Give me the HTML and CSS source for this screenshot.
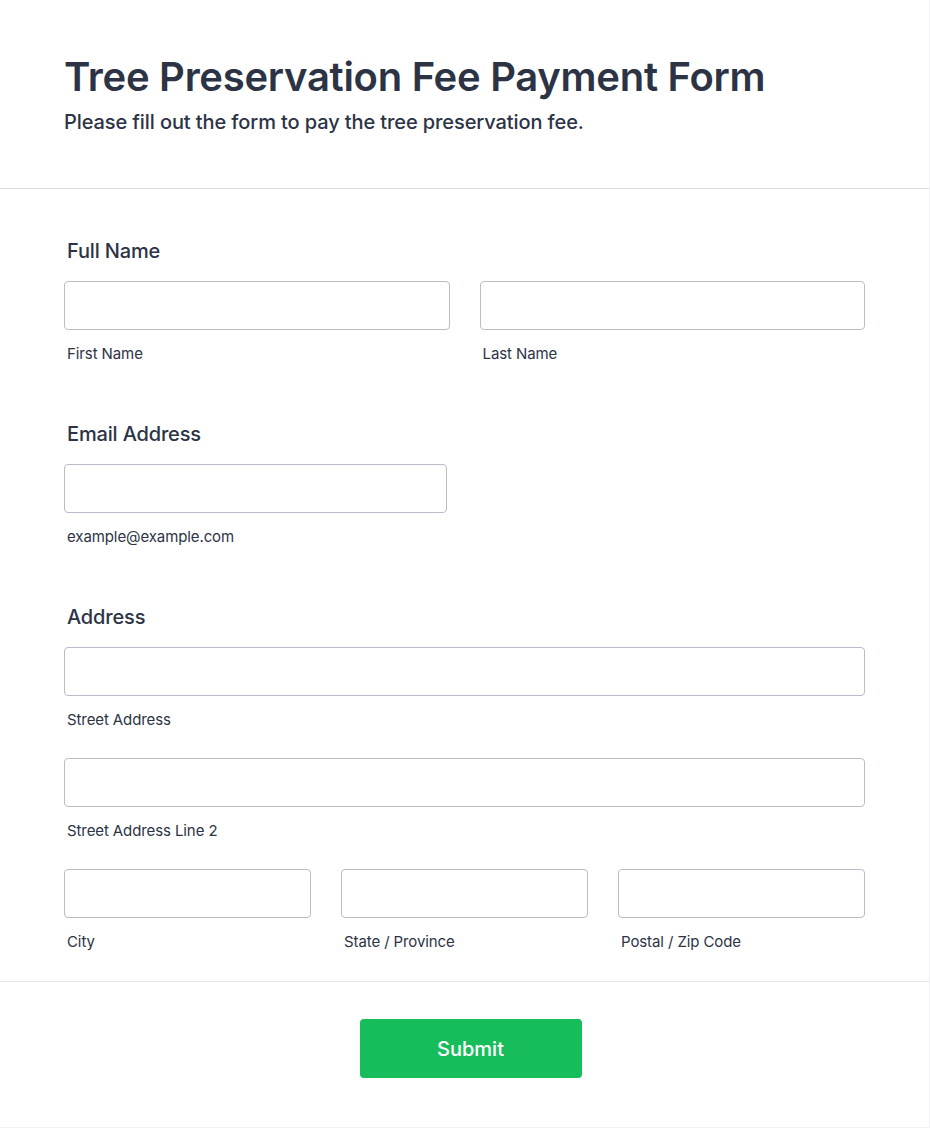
FILE: index.html
```html
<!DOCTYPE html>
<html lang="en">
<head>
<meta charset="utf-8">
<title>Tree Preservation Fee Payment Form</title>
<link rel="stylesheet" href="styles.css">
</head>
<body>
<div class="card">
  <header class="form-header">
    <h1 class="title">Tree Preservation Fee Payment Form</h1>
    <p class="subtitle">Please fill out the form to pay the tree preservation fee.</p>
  </header>
  <form class="form-body">
    <div class="field">
      <label class="label">Full Name</label>
      <div class="row two">
        <div class="col"><input class="input" type="text"><span class="sub">First Name</span></div>
        <div class="col"><input class="input" type="text"><span class="sub">Last Name</span></div>
      </div>
    </div>
    <div class="field">
      <label class="label">Email Address</label>
      <div class="col email"><input class="input" type="email"><span class="sub">example@example.com</span></div>
    </div>
    <div class="field">
      <label class="label">Address</label>
      <div class="col"><input class="input" type="text"><span class="sub">Street Address</span></div>
      <div class="col next"><input class="input" type="text"><span class="sub">Street Address Line 2</span></div>
      <div class="row three next">
        <div class="col"><input class="input" type="text"><span class="sub">City</span></div>
        <div class="col"><input class="input" type="text"><span class="sub">State / Province</span></div>
        <div class="col"><input class="input" type="text"><span class="sub">Postal / Zip Code</span></div>
      </div>
    </div>
  </form>
  <div class="form-footer">
    <button class="submit" type="button">Submit</button>
  </div>
</div>
</body>
</html>
```
FILE: styles.css
```css
* { box-sizing: border-box; }
html, body { margin: 0; padding: 0; background: #ffffff; }
body {
  font-family: Inter, "Noto Sans", "Liberation Sans", sans-serif;
  color: #2c3345;
}
.card {
  width: 930px;
  min-height: 1128px;
  background: #fff;
  border-right: 1px solid #f0f0f5;
  border-bottom: 1px solid #f0f0f5;
}
.form-header {
  padding: 53px 64px 54px 64px;
  border-bottom: 1px solid #dcdce8;
}
.title {
  margin: 0;
  font-size: 40px;
  line-height: 48px;
  font-weight: 600;
  letter-spacing: -0.28px;
  color: #2c3345;
}
.subtitle {
  margin: 9px 0 0 0;
  font-size: 20px;
  line-height: 24px;
  font-weight: 500;
  letter-spacing: -0.1px;
  color: #2c3345;
}
.form-body {
  padding: 50px 64px 30px 64px;
  border-bottom: 1px solid #e6e6ee;
}
.field + .field { margin-top: 59px; }
.label {
  display: block;
  margin: 0 0 18px 3px;
  font-size: 20px;
  line-height: 24px;
  font-weight: 500;
  letter-spacing: -0.16px;
  color: #2c3345;
}
.row { display: grid; gap: 30px; }
.row.two { grid-template-columns: 1fr 1fr; }
.row.three { grid-template-columns: 1fr 1fr 1fr; }
.col { display: flex; flex-direction: column; }
.col.email { width: 383px; }
.next { margin-top: 29px; }
.input {
  display: block;
  width: 100%;
  height: 49px;
  margin: 0;
  border: 1px solid #b8bdc9;
  border-radius: 4px;
  background: #fff;
  font: inherit;
}
.sub {
  display: block;
  margin: 15px 0 0 3px;
  font-size: 15px;
  line-height: 18px;
  letter-spacing: -0.1px;
  color: #2c3345;
}
.form-footer {
  display: flex;
  justify-content: center;
  padding: 37px 0 0 12px;
}
.submit {
  width: 222px;
  height: 59px;
  border: none;
  border-radius: 4px;
  background: #18bd5b;
  color: #fff;
  font-family: Inter, "Noto Sans", "Liberation Sans", sans-serif;
  font-size: 20px;
  font-weight: 500;
  cursor: pointer;
}
```
